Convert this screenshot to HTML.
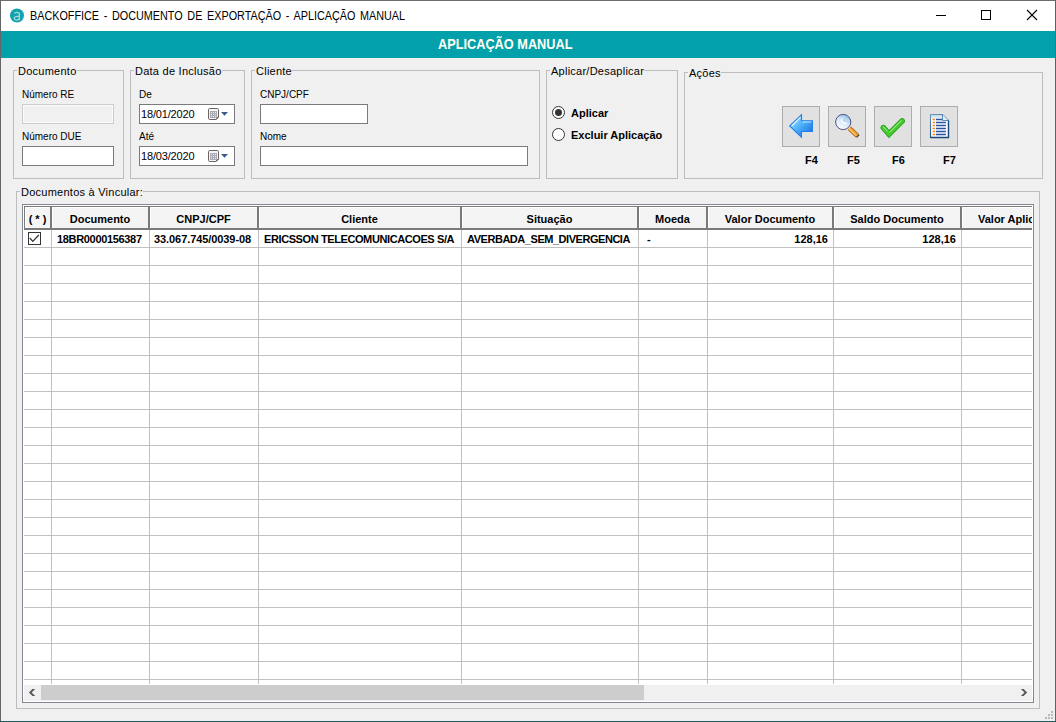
<!DOCTYPE html>
<html><head><meta charset="utf-8">
<style>
*{box-sizing:border-box;margin:0;padding:0}
html,body{width:1056px;height:722px;overflow:hidden}
body{position:relative;background:#F0F0F0;font-family:"Liberation Sans",sans-serif;color:#000}
.a{position:absolute}
.t{position:absolute;white-space:nowrap;font-size:11px;line-height:11px}
.b{font-weight:bold}
.gb{position:absolute;border:1px solid #BDBDBD}
.cap{position:absolute;white-space:nowrap;font-size:11px;line-height:11px;letter-spacing:0.25px;background:#F0F0F0;padding:0 0 0 1px}
.inp{position:absolute;border:1px solid #7A7A7A;background:#fff}
.btn{position:absolute;width:38px;height:41px;border:1px solid #ADADAD;background:#E1E1E1}
.radio{position:absolute;width:13px;height:13px;border:1px solid #333;border-radius:50%;background:#fff}
.hc{position:absolute;top:206px;height:24px;background:#F4F4F4;border-top:1px solid #7A7A7A;border-bottom:2px solid #7A7A7A;box-shadow:inset 1px 1px 0 #fff}
.vl{position:absolute;top:230px;width:1px;height:454px;background:#C0C0C0}
.hl{position:absolute;left:24px;width:1008px;height:1px;background:#C0C0C0}
</style></head>
<body>
<!-- window frame -->
<div class="a" style="left:0;top:0;width:1056px;height:1px;background:#6E6E6E"></div>
<div class="a" style="left:0;top:0;width:1px;height:722px;background:#656565"></div>
<div class="a" style="left:1055px;top:0;width:1px;height:722px;background:#606060"></div>
<div class="a" style="left:0;top:721px;width:1056px;height:1px;background:#1F5A5A"></div>
<!-- title bar -->
<div class="a" style="left:1px;top:1px;width:1054px;height:30px;background:#fff"></div>
<svg class="a" style="left:9px;top:8px" width="16" height="16" viewBox="0 0 16 16"><circle cx="8" cy="7.5" r="7" fill="#12A2AD"/><path d="M5.3 5.2Q8 3.4 10.3 5.2V12.2M10.3 8.6Q5.2 8 5.2 10.3Q5.4 12.3 8 12.1Q10 11.8 10.3 10" stroke="#A6DCE0" stroke-width="1.25" fill="none"/></svg>

<div class="t" id="title" style="left:30px;top:10px;font-size:12px;line-height:12px;transform:scaleX(0.9);transform-origin:0 0;word-spacing:1.9px;color:#000">BACKOFFICE - DOCUMENTO DE EXPORTAÇÃO - APLICAÇÃO MANUAL</div>
<div class="a" style="left:936px;top:15px;width:10px;height:1px;background:#000"></div>
<div class="a" style="left:981px;top:10px;width:10px;height:10px;border:1px solid #000"></div>
<svg class="a" style="left:1026px;top:9px" width="12" height="12" viewBox="0 0 12 12"><path d="M1 1L11 11M11 1L1 11" stroke="#000" stroke-width="1.1" fill="none"/></svg>
<!-- teal header -->
<div class="a" style="left:1px;top:31px;width:1054px;height:27px;background:#01A0AA"></div>
<div class="t b" id="hdr" style="left:438px;top:37px;font-size:14px;line-height:14px;transform:scaleX(0.91);transform-origin:0 0;color:#FFFFF4">APLICAÇÃO MANUAL</div>

<!-- Group: Documento -->
<div class="gb" style="left:13px;top:70px;width:111px;height:109px"></div>
<div class="cap" style="left:17px;top:66px">Documento</div>
<div class="t" style="left:22px;top:90px;font-size:10px;line-height:10px">Número RE</div>
<div class="a" style="left:22px;top:104px;width:92px;height:20px;border:1px solid #CCCCCC;box-shadow:inset 0 0 0 1px #FAFAFA;background:#F0F0F0"></div>
<div class="t" style="left:22px;top:132px;font-size:10px;line-height:10px">Número DUE</div>
<div class="inp" style="left:22px;top:146px;width:92px;height:20px"></div>

<!-- Group: Data de Inclusão -->
<div class="gb" style="left:130px;top:70px;width:115px;height:109px"></div>
<div class="cap" style="left:134px;top:66px">Data de Inclusão</div>
<div class="t" style="left:139px;top:90px;font-size:10px;line-height:10px">De</div>
<div class="inp" style="left:139px;top:104px;width:96px;height:20px"></div>
<div class="t" style="left:141px;top:109px;letter-spacing:-0.17px">18/01/2020</div>
<div class="t" style="left:139px;top:132px;font-size:10px;line-height:10px">Até</div>
<div class="inp" style="left:139px;top:146px;width:96px;height:20px"></div>
<div class="t" style="left:141px;top:151px;letter-spacing:-0.17px">18/03/2020</div>

<!-- Group: Cliente -->
<div class="gb" style="left:251px;top:70px;width:289px;height:109px"></div>
<div class="cap" style="left:255px;top:66px">Cliente</div>
<div class="t" style="left:260px;top:90px;font-size:10px;line-height:10px">CNPJ/CPF</div>
<div class="inp" style="left:260px;top:104px;width:108px;height:20px"></div>
<div class="t" style="left:260px;top:132px;font-size:10px;line-height:10px">Nome</div>
<div class="inp" style="left:260px;top:146px;width:268px;height:20px"></div>

<!-- Group: Aplicar/Desaplicar -->
<div class="gb" style="left:546px;top:70px;width:132px;height:109px"></div>
<div class="cap" style="left:550px;top:66px">Aplicar/Desaplicar</div>
<div class="radio" style="left:552px;top:106px"></div>
<div class="a" style="left:555px;top:109px;width:7px;height:7px;border-radius:50%;background:#333"></div>
<div class="t b" style="left:571px;top:108px">Aplicar</div>
<div class="radio" style="left:552px;top:128px"></div>
<div class="t b" style="left:571px;top:130px">Excluir Aplicação</div>

<!-- Group: Ações -->
<div class="gb" style="left:684px;top:72px;width:359px;height:107px"></div>
<div class="cap" style="left:688px;top:68px">Ações</div>
<div class="btn" style="left:782px;top:106px"></div>
<div class="btn" style="left:828px;top:106px"></div>
<div class="btn" style="left:874px;top:106px"></div>
<div class="btn" style="left:920px;top:106px"></div>
<div class="t b" style="left:805px;top:155px">F4</div>
<div class="t b" style="left:847px;top:155px">F5</div>
<div class="t b" style="left:892px;top:155px">F6</div>
<div class="t b" style="left:943px;top:155px">F7</div>


<!-- icons -->
<svg class="a" style="left:782px;top:106px" width="38" height="41" viewBox="0 0 38 41">
<defs><linearGradient id="ga" x1="0" y1="0" x2="1" y2="1"><stop offset="0" stop-color="#D2F0FF"/><stop offset="0.4" stop-color="#5CBCFB"/><stop offset="1" stop-color="#0A64DA"/></linearGradient></defs>
<path d="M7.7 20L19.5 8.7V14.7H30.4V25.5H19.5V31.2Z" fill="url(#ga)" stroke="#1C80EE" stroke-width="1.1" stroke-linejoin="miter"/>
<path d="M20.5 16H29.4" stroke="#B8E4FF" stroke-width="1.1"/>
<path d="M9.6 20L18.5 11.4" stroke="#EAF8FF" stroke-width="1.1"/>
</svg>
<svg class="a" style="left:828px;top:106px" width="38" height="41" viewBox="0 0 38 41">
<defs><linearGradient id="gm" x1="0.2" y1="1" x2="0.8" y2="0"><stop offset="0" stop-color="#FFFFFF"/><stop offset="0.5" stop-color="#D8EAF8"/><stop offset="1" stop-color="#8DB8E4"/></linearGradient></defs>
<path d="M21.4 22.3L29.6 30" stroke="#A85C08" stroke-width="4.6" stroke-linecap="butt"/>
<path d="M21.2 22.1L29.2 29.6" stroke="#F2A838" stroke-width="3.2" stroke-linecap="butt"/>
<path d="M21 22.8L27.6 29.2" stroke="#FFDE9A" stroke-width="1" stroke-linecap="butt"/>
<path d="M28.6 31.4L31.2 28.8" stroke="#3A3A70" stroke-width="1.1"/>
<circle cx="15.2" cy="16" r="7.6" fill="url(#gm)" stroke="#48487C" stroke-width="0.95"/>
<path d="M14.2 12.2A3.4 3.4 0 0 0 18.8 16.8" stroke="#FFFFFF" stroke-width="1.3" fill="none" opacity="0.85"/>
<path d="M15.4 13.2A2.2 2.2 0 0 0 17.8 15.6" stroke="#9CC0E8" stroke-width="0.8" fill="none" opacity="0.8"/>
</svg>
<svg class="a" style="left:874px;top:106px" width="38" height="41" viewBox="0 0 38 41">
<path d="M9.4 21.7L15 28.1L28.1 15" stroke="#22A018" stroke-width="5.6" stroke-linecap="round" stroke-linejoin="miter" stroke-miterlimit="4" fill="none"/>
<path d="M9.4 21.7L15 28.1L28.1 15" stroke="#46C830" stroke-width="4" stroke-linecap="round" stroke-linejoin="miter" stroke-miterlimit="4" fill="none"/>
<path d="M15.6 26.2L27.4 14.4M9 20.5L13.6 25.4" stroke="#B4F29A" stroke-width="1" fill="none"/>
</svg>
<svg class="a" style="left:920px;top:106px" width="38" height="41" viewBox="0 0 38 41">
<defs><linearGradient id="gd" x1="0" y1="0" x2="0" y2="1"><stop offset="0" stop-color="#B8D0E4"/><stop offset="0.22" stop-color="#FFFFFF"/><stop offset="1" stop-color="#F6FAFD"/></linearGradient>
<linearGradient id="gds" x1="0" y1="0" x2="0.3" y2="1"><stop offset="0" stop-color="#6F98BC"/><stop offset="1" stop-color="#174878"/></linearGradient></defs>
<path d="M10.5 8.5H22.5L28.5 14.5V31.5H10.5Z" fill="url(#gd)" stroke="url(#gds)" stroke-width="1.1"/>
<path d="M10.5 31.5H28.5V14.5" fill="none" stroke="#174878" stroke-width="1.3"/>
<path d="M22.5 8.5V14.5H28.5" fill="#E4EEF6" stroke="#4F7FA8" stroke-width="0.9"/>
<g stroke-width="1.3">
<path d="M12.6 13.5H15.1M12.6 16.5H15.1M12.6 19.5H15.1M12.6 22.5H15.1M12.6 25.5H15.1M12.6 28.5H15.1" stroke="#F08A1C"/>
<path d="M16 13.5H22M16 16.5H25.9M16 19.5H25.9M16 22.5H25.9M16 25.5H25.9M16 28.5H25.9" stroke="#2E52A4"/>
</g>
</svg>
<!-- date picker icons -->
<svg class="a" style="left:206px;top:106px" width="26" height="16" viewBox="0 0 26 16">
<path d="M2.5 3.7Q2.5 2.5 3.7 2.5H11.3Q12.5 2.5 12.5 3.7V11.3L10.3 13.5H3.7Q2.5 13.5 2.5 12.3Z" fill="#F2F4F8" stroke="#6E6460" stroke-width="1"/><path d="M10 13.6V11H12.6Z" fill="#6E6460"/>
<rect x="4" y="5" width="7" height="7" fill="#A8ABB3"/>
<g fill="#E8EAEE"><rect x="5" y="6" width="1" height="1"/><rect x="7" y="6" width="1" height="1"/><rect x="9" y="6" width="1" height="1"/><rect x="5" y="8" width="1" height="1"/><rect x="7" y="8" width="1" height="1"/><rect x="9" y="8" width="1" height="1"/><rect x="5" y="10" width="1" height="1"/><rect x="7" y="10" width="1" height="1"/><rect x="9" y="10" width="1" height="1"/></g>
<path d="M15 6H22L18.5 9.8Z" fill="#3A5A8A"/>
</svg>
<svg class="a" style="left:206px;top:148px" width="26" height="16" viewBox="0 0 26 16">
<path d="M2.5 3.7Q2.5 2.5 3.7 2.5H11.3Q12.5 2.5 12.5 3.7V11.3L10.3 13.5H3.7Q2.5 13.5 2.5 12.3Z" fill="#F2F4F8" stroke="#6E6460" stroke-width="1"/><path d="M10 13.6V11H12.6Z" fill="#6E6460"/>
<rect x="4" y="5" width="7" height="7" fill="#A8ABB3"/>
<g fill="#E8EAEE"><rect x="5" y="6" width="1" height="1"/><rect x="7" y="6" width="1" height="1"/><rect x="9" y="6" width="1" height="1"/><rect x="5" y="8" width="1" height="1"/><rect x="7" y="8" width="1" height="1"/><rect x="9" y="8" width="1" height="1"/><rect x="5" y="10" width="1" height="1"/><rect x="7" y="10" width="1" height="1"/><rect x="9" y="10" width="1" height="1"/></g>
<path d="M15 6H22L18.5 9.8Z" fill="#3A5A8A"/>
</svg>

<!-- Group: Documentos à Vincular -->
<div class="gb" style="left:16px;top:191px;width:1024px;height:518px"></div>
<div class="cap" style="left:20px;top:187px">Documentos à Vincular:</div>

<!-- Grid -->
<div class="a" style="left:22px;top:204px;width:1012px;height:499px;border:1px solid #828790;background:#fff"></div>
<div class="a" style="left:24px;top:206px;width:1008px;height:24px;background:#7A7A7A"></div>
<div class="a" style="left:25px;top:207px;width:25px;height:21px;background:#F4F4F4;box-shadow:inset 1px 1px 0 #fff"></div>
<div class="a" style="left:52px;top:207px;width:96px;height:21px;background:#F4F4F4;box-shadow:inset 1px 1px 0 #fff"></div>
<div class="a" style="left:150px;top:207px;width:107px;height:21px;background:#F4F4F4;box-shadow:inset 1px 1px 0 #fff"></div>
<div class="a" style="left:259px;top:207px;width:201px;height:21px;background:#F4F4F4;box-shadow:inset 1px 1px 0 #fff"></div>
<div class="a" style="left:462px;top:207px;width:175px;height:21px;background:#F4F4F4;box-shadow:inset 1px 1px 0 #fff"></div>
<div class="a" style="left:639px;top:207px;width:67px;height:21px;background:#F4F4F4;box-shadow:inset 1px 1px 0 #fff"></div>
<div class="a" style="left:708px;top:207px;width:124px;height:21px;background:#F4F4F4;box-shadow:inset 1px 1px 0 #fff"></div>
<div class="a" style="left:834px;top:207px;width:126px;height:21px;background:#F4F4F4;box-shadow:inset 1px 1px 0 #fff"></div>
<div class="a" style="left:962px;top:207px;width:70px;height:21px;background:#F4F4F4;box-shadow:inset 1px 1px 0 #fff"></div>
<div class="vl" style="left:51px"></div>
<div class="vl" style="left:149px"></div>
<div class="vl" style="left:258px"></div>
<div class="vl" style="left:461px"></div>
<div class="vl" style="left:638px"></div>
<div class="vl" style="left:707px"></div>
<div class="vl" style="left:833px"></div>
<div class="vl" style="left:961px"></div>
<div class="hl" style="top:247px"></div>
<div class="hl" style="top:265px"></div>
<div class="hl" style="top:283px"></div>
<div class="hl" style="top:301px"></div>
<div class="hl" style="top:319px"></div>
<div class="hl" style="top:337px"></div>
<div class="hl" style="top:355px"></div>
<div class="hl" style="top:373px"></div>
<div class="hl" style="top:391px"></div>
<div class="hl" style="top:409px"></div>
<div class="hl" style="top:427px"></div>
<div class="hl" style="top:445px"></div>
<div class="hl" style="top:463px"></div>
<div class="hl" style="top:481px"></div>
<div class="hl" style="top:499px"></div>
<div class="hl" style="top:517px"></div>
<div class="hl" style="top:535px"></div>
<div class="hl" style="top:553px"></div>
<div class="hl" style="top:571px"></div>
<div class="hl" style="top:589px"></div>
<div class="hl" style="top:607px"></div>
<div class="hl" style="top:625px"></div>
<div class="hl" style="top:643px"></div>
<div class="hl" style="top:661px"></div>
<div class="hl" style="top:679px"></div>
<div class="t b" style="left:25px;top:214px;width:25px;text-align:center">( * )</div>
<div class="t b" style="left:52px;top:214px;width:96px;text-align:center">Documento</div>
<div class="t b" style="left:150px;top:214px;width:107px;text-align:center">CNPJ/CPF</div>
<div class="t b" style="left:259px;top:214px;width:201px;text-align:center">Cliente</div>
<div class="t b" style="left:462px;top:214px;width:175px;text-align:center">Situação</div>
<div class="t b" style="left:639px;top:214px;width:67px;text-align:center">Moeda</div>
<div class="t b" style="left:708px;top:214px;width:124px;text-align:center">Valor Documento</div>
<div class="t b" style="left:834px;top:214px;width:126px;text-align:center">Saldo Documento</div>
<div class="a" style="left:962px;top:207px;width:70px;height:21px;overflow:hidden"><div class="t b" style="left:16px;top:7px">Valor Aplicado</div></div>
<div class="a" style="left:28px;top:232px;width:13px;height:13px;border:1px solid #333;background:#fff"></div>
<svg class="a" style="left:28px;top:232px" width="13" height="13" viewBox="0 0 13 13"><path d="M1.8 6L4.8 9.4L10.8 3" stroke="#333" stroke-width="1.3" fill="none"/></svg>
<div class="t b" style="left:57px;top:234px;letter-spacing:-0.33px">18BR0000156387</div>
<div class="t b" style="left:154px;top:234px;letter-spacing:-0.08px">33.067.745/0039-08</div>
<div class="t b" style="left:264px;top:234px;letter-spacing:-0.4px">ERICSSON TELECOMUNICACOES S/A</div>
<div class="t b" style="left:467px;top:234px;letter-spacing:-0.46px">AVERBADA_SEM_DIVERGENCIA</div>
<div class="t b" style="left:647px;top:234px">-</div>
<div class="t b" style="left:708px;top:234px;width:120px;text-align:right">128,16</div>
<div class="t b" style="left:834px;top:234px;width:122px;text-align:right">128,16</div>

<div class="a" style="left:24px;top:685px;width:1008px;height:16px;background:#F0F0F0"></div>
<div class="a" style="left:41px;top:685px;width:603px;height:15px;background:#CDCDCD"></div>
<svg class="a" style="left:24px;top:685px" width="16" height="16" viewBox="0 0 16 16"><path d="M11.2 3.9H8.5L4.9 7.4L8.5 10.9H11.2L7.6 7.4Z" fill="#555"/></svg>
<svg class="a" style="left:1015px;top:685px" width="16" height="16" viewBox="0 0 16 16"><path d="M5.9 3.9H8.6L12.2 7.4L8.6 10.9H5.9L9.5 7.4Z" fill="#555"/></svg>
<!-- size grip -->
<div class="a" style="left:1051px;top:711px;width:2px;height:2px;background:#B8B8B8"></div>
<div class="a" style="left:1048px;top:714px;width:2px;height:2px;background:#B8B8B8"></div>
<div class="a" style="left:1051px;top:714px;width:2px;height:2px;background:#B8B8B8"></div>
<div class="a" style="left:1045px;top:717px;width:2px;height:2px;background:#B8B8B8"></div>
<div class="a" style="left:1048px;top:717px;width:2px;height:2px;background:#B8B8B8"></div>
<div class="a" style="left:1051px;top:717px;width:2px;height:2px;background:#B8B8B8"></div>
</body></html>
